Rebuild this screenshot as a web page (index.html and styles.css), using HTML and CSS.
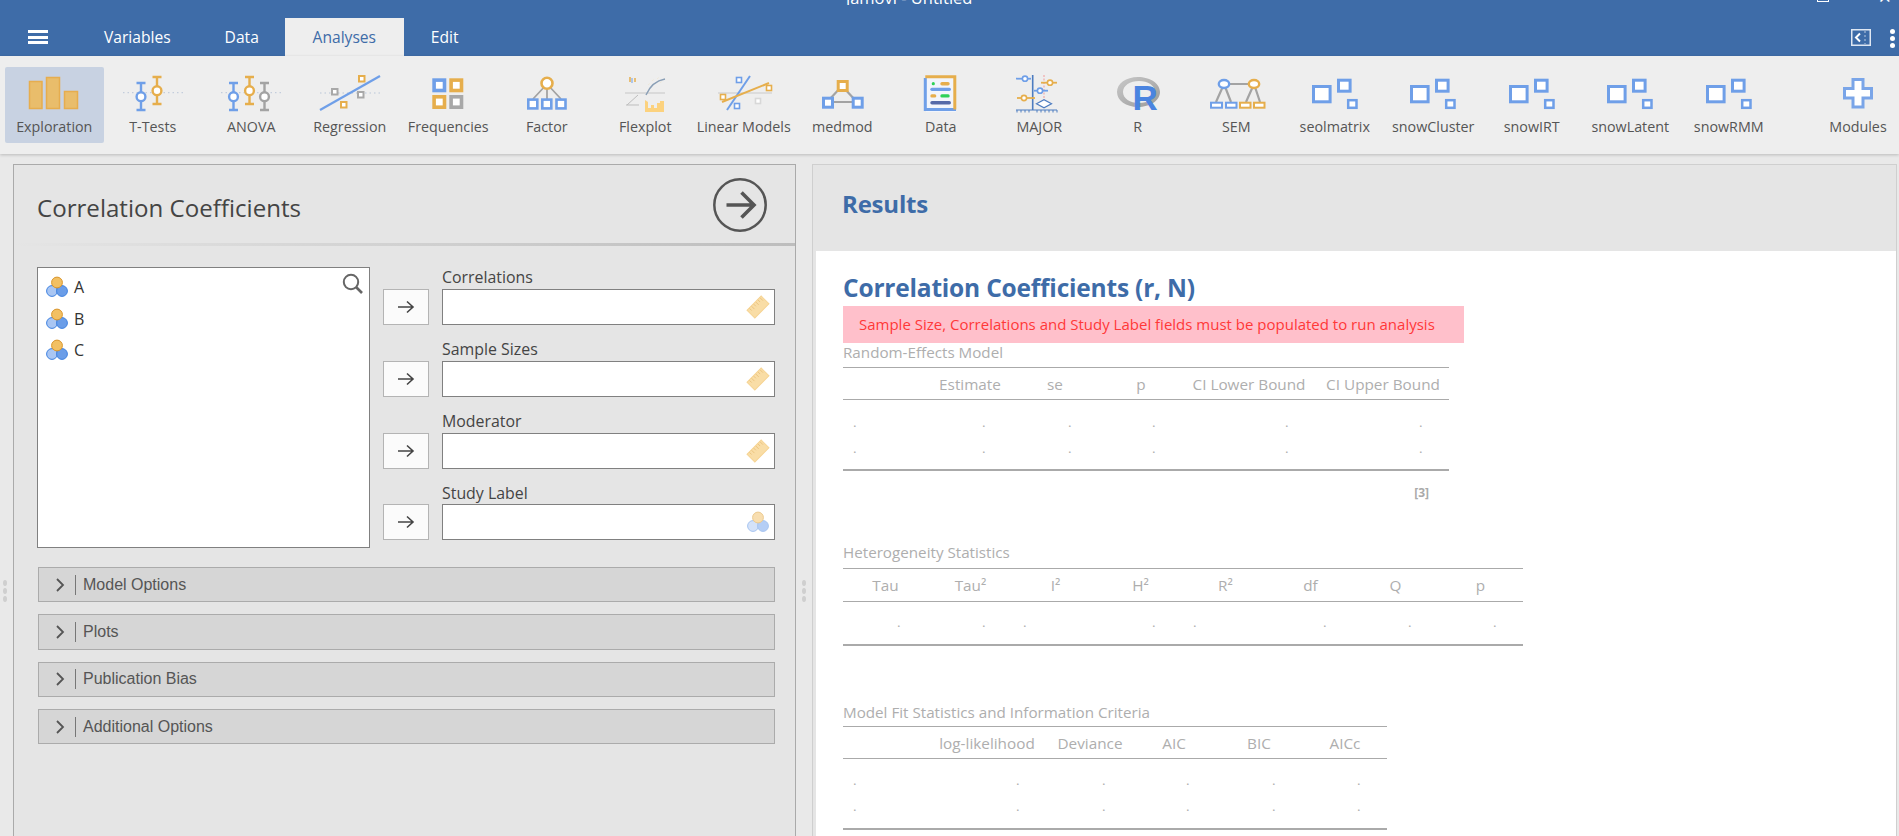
FILE: index.html
```html
<!DOCTYPE html>
<html lang="en">
<head>
<meta charset="utf-8">
<title>jamovi - Untitled</title>
<link rel="stylesheet" href="styles.css">
</head>
<body>
<svg class="defs" width="0" height="0" aria-hidden="true">
  <defs>
    <symbol id="snow" viewBox="0 0 64 44">
      <g fill="#fff" stroke="#6f9fe8">
        <rect x="10.5" y="14.5" width="16.6" height="15.3" stroke-width="3"/>
        <rect x="35.5" y="8.2" width="11.6" height="11" stroke-width="3"/>
        <rect x="45.2" y="28.2" width="8.3" height="7.6" stroke-width="2.5"/>
      </g>
    </symbol>
    <symbol id="ruler" viewBox="0 0 24 24">
      <g transform="rotate(-45 12 12)">
        <rect x="2" y="6.5" width="20" height="11" fill="#f9dda6" stroke="#f6d494"/>
        <path d="M5 7v3M8 7v4M11 7v3M14 7v4M17 7v3M20 7v4" stroke="#e8bf78" fill="none" stroke-width=".8"/>
      </g>
    </symbol>
    <symbol id="nominal" viewBox="0 0 22 22">
      <circle cx="6" cy="15" r="5.4" fill="#a9c6f3" stroke="#3f82e0"/>
      <circle cx="16" cy="15" r="5.4" fill="#6a9de8" stroke="#3f82e0"/>
      <circle cx="11" cy="6.5" r="5.4" fill="#f2c063" stroke="#d9952b"/>
    </symbol>
    <symbol id="nominal-off" viewBox="0 0 22 22">
      <circle cx="6" cy="15" r="5.4" fill="#d4e2f9" stroke="#a6c4f0"/>
      <circle cx="16" cy="15" r="5.4" fill="#b5cef5" stroke="#a6c4f0"/>
      <circle cx="11" cy="6.5" r="5.4" fill="#f8deb0" stroke="#ecca8f"/>
    </symbol>
    <symbol id="to" viewBox="0 0 18 14">
      <path d="M1 7H16M10 1.5L16 7L10 12.5" fill="none" stroke="#444" stroke-width="1.6"/>
    </symbol>
  </defs>
</svg>

<header class="titlebar">
  <span class="app-title">jamovi - Untitled</span>
  <span class="win-btns"><i class="win-max"></i><span class="win-close">×</span></span>
</header>

<nav class="tabs">
  <button class="burger" aria-label="Menu"><span></span><span></span><span></span></button>
  <span class="tab tab-variables">Variables</span>
  <span class="tab tab-data">Data</span>
  <span class="tab tab-active">Analyses</span>
  <span class="tab tab-edit">Edit</span>
  <span class="tab-tools">
    <svg class="mode-ico" viewBox="0 0 20 17"><rect x=".75" y=".75" width="18.5" height="15.5" fill="none" stroke="#dfe7f2" stroke-width="1.5"/><path d="M9 4.5L5 8.5L9 12.5" fill="none" stroke="#fff" stroke-width="2"/><path d="M14 2v13" stroke="#b8c9e0" stroke-dasharray="2 2"/></svg>
    <span class="kebab"><span></span><span></span><span></span></span>
  </span>
</nav>

<section class="ribbon">
  <div class="item item-on">
    <svg class="ico" viewBox="0 0 64 44"><g fill="#e9bd6b" stroke="#e6ad4e" stroke-width="1.5"><rect x="7.5" y="9.5" width="12.5" height="27"/><rect x="24.5" y="5.5" width="13" height="31"/><rect x="42.5" y="19.5" width="13" height="17"/></g></svg>
    <span>Exploration</span>
  </div>
  <div class="item">
    <svg class="ico" viewBox="0 0 64 44"><path d="M2 20.7H62" stroke="#b9c6d8" stroke-dasharray="1.5 3" fill="none"/><g fill="#fff" stroke-width="2.4"><g stroke="#6f9fe8"><path d="M20 11V38M15.5 11H24.5M15.5 38H24.5"/><circle cx="20" cy="24.7" r="4.4"/></g><g stroke="#e6ae4c"><path d="M36 5V32M31.5 5H40.5M31.5 32H40.5"/><circle cx="36" cy="18.7" r="4.4"/></g></g></svg>
    <span>T-Tests</span>
  </div>
  <div class="item">
    <svg class="ico" viewBox="0 0 64 44"><path d="M2 20.7H62" stroke="#b9c6d8" stroke-dasharray="1.5 3" fill="none"/><g fill="#fff" stroke-width="2.4"><g stroke="#6f9fe8"><path d="M14.5 11V38M10 11H19M10 38H19"/><circle cx="14.5" cy="24.7" r="4.4"/></g><g stroke="#e6ae4c"><path d="M30.5 5V32M26 5H35M26 32H35"/><circle cx="30.5" cy="18.7" r="4.4"/></g><g stroke="#a3a3a3"><path d="M45.5 11V38M41 11H50M41 38H50"/><circle cx="45.5" cy="24.7" r="4.4"/></g></g></svg>
    <span>ANOVA</span>
  </div>
  <div class="item">
    <svg class="ico" viewBox="0 0 64 44"><path d="M2 21H62" stroke="#b9c6d8" stroke-dasharray="1.5 3" fill="none"/><path d="M2 38L62 4" stroke="#6f9fe8" stroke-width="2.2"/><g fill="#fff" stroke-width="2"><rect x="41" y="4" width="5.5" height="5.5" stroke="#e6ae4c"/><rect x="14" y="17" width="5.5" height="5.5" stroke="#a8a8a8"/><rect x="40" y="20" width="5.5" height="5.5" stroke="#a8a8a8"/><rect x="23" y="30" width="5.5" height="5.5" stroke="#e6ae4c"/></g></svg>
    <span>Regression</span>
  </div>
  <div class="item">
    <svg class="ico" viewBox="0 0 64 44"><g fill="#fff" stroke-width="3.6"><rect x="18.1" y="8.1" width="10.4" height="10.4" stroke="#6f9fe8"/><rect x="35.1" y="8.1" width="10.4" height="10.4" stroke="#e6ae4c"/><rect x="18.1" y="24.8" width="10.4" height="10.4" stroke="#e6ae4c"/><rect x="35.1" y="24.8" width="10.4" height="10.4" stroke="#a8a8a8"/></g></svg>
    <span>Frequencies</span>
  </div>
  <div class="item">
    <svg class="ico" viewBox="0 0 64 44"><path d="M32 12L18 27M32 12V27M32 12L46 27" stroke="#a3a3a3" stroke-width="1.8" fill="none"/><circle cx="32" cy="11.3" r="5.5" fill="#fff" stroke="#e6ae4c" stroke-width="2.6"/><g fill="#fff" stroke="#6f9fe8" stroke-width="2.6"><rect x="13.3" y="27.6" width="9" height="8.8"/><rect x="27.3" y="27.6" width="9" height="8.8"/><rect x="41.5" y="27.6" width="9" height="8.8"/></g></svg>
    <span>Factor</span>
  </div>
  <div class="item">
    <svg class="ico" viewBox="0 0 64 44"><path d="M12 21H52" stroke="#c6c6c6" stroke-width="1.2"/><path d="M33 23C36 16 41 9 52 7" fill="none" stroke="#8a9fb6" stroke-width="1.4"/><path d="M36 12l.1.1M40 8l.1.1M45 6l.1.1M48 10l.1.1" stroke="#f0c56f" stroke-width="1.5"/><path d="M17 5V10M22 6V10" stroke="#e6ae4c" stroke-width="1.5"/><path d="M19 6V11" stroke="#6f9fe8" stroke-width="1"/><path d="M13 33H26M14 33L25 23" stroke="#bdbdbd" fill="none"/><path d="M32 28L35 30V36H38V33H41V36H44V31H47V29H51V40H32Z" fill="#fcd27e"/></svg>
    <span>Flexplot</span>
  </div>
  <div class="item">
    <svg class="ico" viewBox="0 0 64 44"><path d="M6 21H60" stroke="#dcdcdc" stroke-width="2"/><path d="M15 38L38 4" stroke="#6f9fe8" stroke-width="2"/><path d="M10 30L57 11" stroke="#e6ae4c" stroke-width="2"/><g fill="#fff" stroke-width="1.6"><rect x="24.5" y="5.5" width="5" height="5" stroke="#6f9fe8"/><rect x="54.5" y="13.5" width="5" height="5" stroke="#e6ae4c"/><rect x="8.5" y="22.5" width="5" height="5" stroke="#e6ae4c"/><rect x="22.5" y="31.5" width="5" height="5" stroke="#6f9fe8"/><rect x="43.5" y="26.5" width="5" height="5" stroke="#d8d8d8"/></g></svg>
    <span>Linear Models</span>
  </div>
  <div class="item">
    <svg class="ico" viewBox="0 0 64 44"><path d="M17 30L32 14L47 30H17" fill="none" stroke="#a3a3a3" stroke-width="2.2"/><g fill="#fff" stroke-width="3"><rect x="28.2" y="9.5" width="9" height="9" stroke="#e6ae4c"/><rect x="13.5" y="26.2" width="9" height="9" stroke="#6f9fe8"/><rect x="43.2" y="26.2" width="9" height="9" stroke="#6f9fe8"/></g></svg>
    <span>medmod</span>
  </div>
  <div class="item">
    <svg class="ico" viewBox="0 0 64 44"><rect x="17" y="4" width="30" height="36" fill="#f2f5fb"/><path d="M16.3 6V37.5H47" fill="none" stroke="#6f9fe8" stroke-width="3"/><path d="M16.3 4.8H45.8V37.5" fill="none" stroke="#e6ae4c" stroke-width="3"/><circle cx="24.3" cy="11.7" r="1.6" fill="#2ed158"/><rect x="31.3" y="10" width="9.4" height="3.4" rx="1.7" fill="#e6ae4c"/><rect x="21.3" y="15.7" width="20.7" height="3.2" rx="1.6" fill="#6f9fe8"/><rect x="21.3" y="22.3" width="6" height="3.2" rx="1.6" fill="#e6ae4c"/><rect x="31.3" y="22.3" width="9.4" height="3.2" rx="1.6" fill="#2ed158"/><rect x="21.3" y="29" width="20.7" height="3.4" rx="1.7" fill="#5469a8"/></svg>
    <span>Data</span>
  </div>
  <div class="item">
    <svg class="ico" viewBox="0 0 64 44"><path d="M37 3V28" stroke="#f29a9a" stroke-dasharray="2 1.5"/><path d="M25.7 3V38" stroke="#4d7cc0" stroke-width="1.6"/><path d="M9 38H50M10 38v2.5M14 38v2.5M18 38v2.5M22 38v2.5M30 38v2.5M34 38v2.5M38 38v2.5M42 38v2.5M46 38v2.5M50 38v2.5" stroke="#4d7cc0" fill="none"/><path d="M9 6.7H24" stroke="#6f9fe8" stroke-width="1.8"/><path d="M34 10.7H50" stroke="#e6ae4c" stroke-width="1.8"/><path d="M27 18.7H41" stroke="#6f9fe8" stroke-width="1.8"/><path d="M10 26H28" stroke="#e6ae4c" stroke-width="1.8"/><g fill="#fff" stroke-width="1.6"><circle cx="18" cy="6.7" r="2.6" stroke="#6f9fe8"/><circle cx="43" cy="10.7" r="2.6" stroke="#e6ae4c"/><circle cx="33" cy="18.7" r="2.6" stroke="#6f9fe8"/><circle cx="17" cy="26" r="2.6" stroke="#e6ae4c"/></g><path d="M29.5 31.7L37 27.7L44.5 31.7L37 35.7Z" fill="#fff" stroke="#4d7cc0" stroke-width="1.2"/></svg>
    <span>MAJOR</span>
  </div>
  <div class="item">
    <svg class="ico" viewBox="0 0 64 44"><defs><linearGradient id="rg" x1="0" y1="0" x2="1" y2="1"><stop offset="0" stop-color="#c9c9c9"/><stop offset="1" stop-color="#9a9a9a"/></linearGradient></defs><path fill-rule="evenodd" d="M32 5C44 5 54 11.5 54 20S44 35 32 35S11 28.5 11 20S20 5 32 5ZM33 9C24 9 17 13.5 17 20S24 31 33 31S49 26.5 49 20S42 9 33 9Z" fill="url(#rg)"/><text class="r-logo" x="26.5" y="38">R</text></svg>
    <span>R</span>
  </div>
  <div class="item">
    <svg class="ico" viewBox="0 0 64 44"><path d="M20 12H50M20 12L12 30M20 12L27 30M50 12L42 30M50 12L56 30" stroke="#a3a3a3" stroke-width="2.2" fill="none"/><ellipse cx="20" cy="12" rx="5.2" ry="4" fill="#fff" stroke="#6f9fe8" stroke-width="2.4"/><ellipse cx="50" cy="12" rx="5.2" ry="4" fill="#fff" stroke="#e6ae4c" stroke-width="2.4"/><g fill="#fff" stroke-width="2"><rect x="7" y="30.7" width="11" height="5" stroke="#6f9fe8"/><rect x="22" y="30.7" width="10.5" height="5" stroke="#6f9fe8"/><rect x="36" y="30.7" width="10.5" height="5" stroke="#e6ae4c"/><rect x="50" y="30.7" width="10.5" height="5" stroke="#e6ae4c"/></g></svg>
    <span>SEM</span>
  </div>
  <div class="item"><svg class="ico"><use href="#snow"/></svg><span>seolmatrix</span></div>
  <div class="item"><svg class="ico"><use href="#snow"/></svg><span>snowCluster</span></div>
  <div class="item"><svg class="ico"><use href="#snow"/></svg><span>snowIRT</span></div>
  <div class="item"><svg class="ico"><use href="#snow"/></svg><span>snowLatent</span></div>
  <div class="item"><svg class="ico"><use href="#snow"/></svg><span>snowRMM</span></div>
  <div class="item item-modules">
    <svg class="ico" viewBox="0 0 64 44"><path d="M27 7.5H37V16.5H45.5V26H37V35H27V26H18.5V16.5H27Z" fill="#fff" stroke="#7aa5e8" stroke-width="3"/></svg>
    <span>Modules</span>
  </div>
</section>

<main class="main">
  <div class="gutter gutter-left"><span class="grip"><i></i><i></i><i></i></span></div>

  <section class="options">
    <div class="options-head">
      <h2>Correlation Coefficients</h2>
      <svg class="go" viewBox="0 0 56 56"><circle cx="28" cy="28" r="25.7" fill="none" stroke="#555" stroke-width="2.5"/><path d="M14.5 28H42M29.5 15.5L42 28L29.5 40.5" fill="none" stroke="#555" stroke-width="3.6"/></svg>
    </div>
    <div class="supplier">
      <div class="varlist">
        <div class="var"><svg class="var-ico"><use href="#nominal"/></svg>A</div>
        <div class="var"><svg class="var-ico"><use href="#nominal"/></svg>B</div>
        <div class="var"><svg class="var-ico"><use href="#nominal"/></svg>C</div>
        <svg class="search" viewBox="0 0 22 22"><circle cx="9" cy="9" r="7.2" fill="none" stroke="#666" stroke-width="2"/><path d="M14 14L20 20" stroke="#666" stroke-width="2.6"/></svg>
      </div>
      <div class="targets">
        <div class="target"><label>Correlations</label><button class="move"><svg><use href="#to"/></svg></button><div class="box"><svg class="ruler"><use href="#ruler"/></svg></div></div>
        <div class="target"><label>Sample Sizes</label><button class="move"><svg><use href="#to"/></svg></button><div class="box"><svg class="ruler"><use href="#ruler"/></svg></div></div>
        <div class="target target-tight"><label>Moderator</label><button class="move"><svg><use href="#to"/></svg></button><div class="box"><svg class="ruler"><use href="#ruler"/></svg></div></div>
        <div class="target"><label class="label-low">Study Label</label><button class="move"><svg><use href="#to"/></svg></button><div class="box"><svg class="nominal"><use href="#nominal-off"/></svg></div></div>
      </div>
    </div>
    <div class="collapses">
      <div class="collapse"><svg class="chev" viewBox="0 0 10 16"><path d="M2 2L8 8L2 14" fill="none" stroke="#555" stroke-width="1.8"/></svg><i class="sep"></i>Model Options</div>
      <div class="collapse"><svg class="chev" viewBox="0 0 10 16"><path d="M2 2L8 8L2 14" fill="none" stroke="#555" stroke-width="1.8"/></svg><i class="sep"></i>Plots</div>
      <div class="collapse"><svg class="chev" viewBox="0 0 10 16"><path d="M2 2L8 8L2 14" fill="none" stroke="#555" stroke-width="1.8"/></svg><i class="sep"></i>Publication Bias</div>
      <div class="collapse"><svg class="chev" viewBox="0 0 10 16"><path d="M2 2L8 8L2 14" fill="none" stroke="#555" stroke-width="1.8"/></svg><i class="sep"></i>Additional Options</div>
    </div>
  </section>

  <div class="gutter gutter-mid"><span class="grip"><i></i><i></i><i></i></span></div>

  <section class="results">
    <div class="results-head">Results</div>
    <div class="sheet">
      <h1>Correlation Coefficients (r, N)</h1>
      <div class="alert">Sample Size, Correlations and Study Label fields must be populated to run analysis</div>

      <div class="caption">Random-Effects Model</div>
      <div class="tbl tbl-re">
        <div class="thead t1-head"><span></span><span>Estimate</span><span>se</span><span>p</span><span>CI Lower Bound</span><span>CI Upper Bound</span></div>
        <div class="tbody t1-body">
          <div class="dots t1-dots"><span>.</span><span>.</span><span>.</span><span>.</span><span>.</span><span>.</span></div>
          <div class="dots t1-dots"><span>.</span><span>.</span><span>.</span><span>.</span><span>.</span><span>.</span></div>
        </div>
      </div>
      <div class="note">[3]</div>

      <div class="caption cap-het">Heterogeneity Statistics</div>
      <div class="tbl tbl-het">
        <div class="thead t2-head"><span>Tau</span><span>Tau²</span><span>I²</span><span>H²</span><span>R²</span><span>df</span><span>Q</span><span>p</span></div>
        <div class="tbody t2-body">
          <div class="dots t2-dots"><span>.</span><span>.</span><span>.</span><span>.</span><span>.</span><span>.</span><span>.</span><span>.</span></div>
        </div>
      </div>

      <div class="caption cap-fit">Model Fit Statistics and Information Criteria</div>
      <div class="tbl tbl-fit">
        <div class="thead t3-head"><span></span><span>log-likelihood</span><span>Deviance</span><span>AIC</span><span>BIC</span><span>AICc</span></div>
        <div class="tbody t3-body">
          <div class="dots t3-dots"><span>.</span><span>.</span><span>.</span><span>.</span><span>.</span><span>.</span></div>
          <div class="dots t3-dots"><span>.</span><span>.</span><span>.</span><span>.</span><span>.</span><span>.</span></div>
        </div>
      </div>
    </div>
  </section>
</main>
</body>
</html>
```
FILE: styles.css
```css
* { box-sizing: border-box; }
html, body { margin: 0; height: 100%; }
body {
  display: flex;
  flex-direction: column;
  height: 836px;
  overflow: hidden;
  background: #e9e9e9;
  font-family: "Open Sans", "Noto Sans", sans-serif;
  color: #444;
}
.defs { display: block; height: 0; }

/* title bar: only the bottom few pixels are visible */
.titlebar {
  height: 5px;
  flex: none;
  background: #3e6ca8;
  overflow: hidden;
  display: flex;
  align-items: flex-end;
  color: #fff;
}
.app-title { margin-left: 846px; font-size: 16.5px; line-height: 16px; margin-bottom: -1px; white-space: nowrap; }
.win-btns { margin-left: auto; display: flex; align-items: flex-end; padding-right: 8px; }
.win-max { width: 12px; height: 12px; border: 1.5px solid #fff; margin-right: 49px; margin-bottom: 3px; }
.win-close { font-size: 22px; line-height: 14px; font-style: normal; margin-bottom: 2px; }

.tabs {
  height: 51px;
  flex: none;
  background: #3e6ca8;
  display: flex;
  align-items: stretch;
  color: #fff;
}
.burger {
  width: 20px;
  margin: 25px 0 0 28px;
  padding: 0;
  height: 14px;
  background: none;
  border: 0;
  display: flex;
  flex-direction: column;
  justify-content: space-between;
}
.burger span { display: block; height: 3px; background: #fff; }
.tab { font-size: 15.6px; line-height: 18px; padding-top: 23px; white-space: nowrap; }
.tab-variables { margin-left: 56px; }
.tab-data { margin-left: 54px; }
.tab-active {
  margin: 13px 0 0 26px;
  padding: 10px 0 0;
  width: 119px;
  text-align: center;
  background: #eeeeee;
  color: #3e6ca8;
}
.tab-edit { margin-left: 27px; }
.tab-tools { margin-left: auto; display: flex; align-items: flex-start; padding-top: 24px; }
.mode-ico { width: 20px; height: 17px; }
.kebab { display: flex; flex-direction: column; gap: 2px; margin: 0 4px 0 19px; }
.kebab span { width: 5px; height: 5px; border-radius: 50%; background: #fff; }

.ribbon {
  height: 98px;
  flex: none;
  background: #eeeeee;
  display: flex;
  align-items: flex-start;
  padding: 11px 0 0 5px;
  box-shadow: 0 1px 3px rgba(0, 0, 0, .2);
  position: relative;
}
.item {
  width: 98.5px;
  height: 76px;
  flex: none;
  display: flex;
  flex-direction: column;
  align-items: center;
  padding-top: 5px;
  font-size: 14.3px;
  line-height: 18px;
  color: #555;
  white-space: nowrap;
}
.item-on { background: #c8d2e2; border-radius: 2px; }
.item-modules { margin-left: auto; width: 82px; }
.ico { width: 64px; height: 44px; display: block; margin-bottom: 1.5px; overflow: visible; }
.r-logo { font-family: "Liberation Sans", sans-serif; font-weight: 700; font-size: 35px; fill: #4a84e0; }

.main { flex: 1; display: flex; padding-top: 10px; min-height: 0; }
.gutter { flex: none; padding-top: 416px; display: flex; justify-content: center; }
.gutter-left { width: 13px; justify-content: flex-start; padding-left: 3px; }
.gutter-mid { width: 16px; justify-content: flex-start; padding-left: 6px; }
.grip { display: flex; flex-direction: column; gap: 2px; }
.grip i { width: 4px; height: 6px; border-radius: 50%; background: #cfcfcf; }

.options {
  width: 783px;
  flex: none;
  background: #e5e5e5;
  border: 1px solid #aaa;
  border-bottom: 0;
}
.options-head {
  height: 81px;
  padding: 0 27px 0 23px;
  display: flex;
  align-items: center;
  justify-content: space-between;
  border-bottom: 3px solid;
  border-image: linear-gradient(to right, #e5e5e5, #bdbdbd) 1;
}
.options-head h2 { margin: 7px 0 0; font-size: 24.1px; font-weight: 400; color: #444; }
.go { width: 56px; height: 56px; margin-top: 2px; }

.supplier {
  display: grid;
  grid-template-columns: 333px 393px;
  column-gap: 13px;
  padding: 21px 0 0 23px;
}
.varlist {
  height: 281px;
  background: #fff;
  border: 1px solid #808080;
  padding: 3px 0 0 8px;
  position: relative;
}
.var { height: 31.7px; display: flex; align-items: center; gap: 6px; font-size: 16px; color: #333; }
.var-ico { width: 22px; height: 22px; flex: none; }
.search { position: absolute; top: 5px; right: 5px; width: 22px; height: 22px; }

.target {
  display: grid;
  grid-template-columns: 46px 333px;
  column-gap: 13px;
  margin-bottom: 14px;
}
.target-tight { margin-bottom: 13px; }
.target label {
  grid-column: 2;
  height: 22px;
  font-size: 15.9px;
  line-height: 20px;
  color: #444;
}
.target .label-low { line-height: 22px; }
.move {
  grid-column: 1;
  height: 36px;
  padding: 0;
  background: #fbfbfb;
  border: 1px solid #b4b4b4;
  display: flex;
  align-items: center;
  justify-content: center;
}
.move svg { width: 18px; height: 14px; }
.box {
  height: 36px;
  background: #fff;
  border: 1px solid #808080;
  display: flex;
  align-items: center;
  justify-content: flex-end;
  padding-right: 4px;
}
.ruler { width: 24px; height: 24px; }
.nominal { width: 22px; height: 22px; margin-right: 1px; }

.collapses { padding: 13px 0 0 24px; display: flex; flex-direction: column; gap: 12px; }
.collapse {
  width: 737px;
  height: 35.3px;
  background: #d6d6d6;
  border: 1px solid #ababab;
  display: flex;
  align-items: center;
  font-family: "Liberation Sans", Arial, sans-serif;
  font-size: 16px;
  color: #555;
}
.chev { width: 10px; height: 16px; margin-left: 16px; }
.sep { width: 1px; height: 20px; background: #777; margin: 0 7px 0 10px; }

.results {
  flex: 1;
  min-width: 0;
  margin-right: 2px;
  background: #e5e5e5;
  border: 1px solid #cfcfcf;
  border-bottom: 0;
  display: flex;
  flex-direction: column;
}
.results-head {
  height: 86px;
  flex: none;
  padding: 19px 0 0 29px;
  font-size: 24px;
  line-height: 40px;
  font-weight: 700;
  color: #3e6ca8;
  letter-spacing: -.2px;
}
.sheet { flex: 1; margin-left: 3px; background: #fff; padding: 20px 0 0 27px; }
.sheet h1 {
  margin: 0 0 1px;
  font-size: 24.5px;
  line-height: 34px;
  font-weight: 700;
  color: #3e6ca8;
  letter-spacing: -.2px;
  white-space: nowrap;
}
.alert {
  width: 621px;
  height: 37px;
  background: #ffc0cb;
  color: #ff3838;
  font-size: 15px;
  line-height: 37px;
  padding-left: 16px;
  white-space: nowrap;
}
.caption { font-size: 15.2px; line-height: 18px; color: #aeaeae; padding-bottom: 6px; white-space: nowrap; }
.cap-het { margin-top: 41px; padding-bottom: 7px; }
.cap-fit { margin-top: 57px; padding-bottom: 5px; }
.tbl { border-top: 1px solid #aaa; border-bottom: 2px solid #aaa; color: #aeaeae; }
.tbl-re { width: 606px; }
.tbl-het { width: 680px; }
.tbl-fit { width: 544px; }
.thead {
  display: grid;
  height: 32px;
  font-size: 15.3px;
  line-height: 32px;
  text-align: center;
  border-bottom: 1px solid #aaa;
  white-space: nowrap;
}
.t1-head { grid-template-columns: 82px 90px 80px 92px 124px 144px; }
.t2-head { grid-template-columns: repeat(8, 1fr); height: 33px; }
.t3-head { grid-template-columns: 89px 110px 96px 72px 98px 74px 5px; }
.dots { display: grid; height: 26px; font-size: 13.5px; line-height: 26px; }
.t1-dots { grid-template-columns: 129px 86px 84px 133px 134px 1fr; padding-left: 10px; }
.t2-dots { grid-template-columns: 85px 41px 129px 41px 130px 85px 85px 1fr; padding-left: 54px; }
.t3-dots { grid-template-columns: 163px 86px 84px 86px 85px 1fr; padding-left: 10px; }
.t1-body { padding: 9px 0 8px; }
.t2-body { padding: 7px 0 9px; }
.t3-body { padding: 8px 0 9px; }
.note {
  width: 606px;
  height: 31px;
  padding: 14px 20px 0 0;
  text-align: right;
  font-size: 12px;
  line-height: 16px;
  font-weight: 700;
  color: #aaa;
}
```
